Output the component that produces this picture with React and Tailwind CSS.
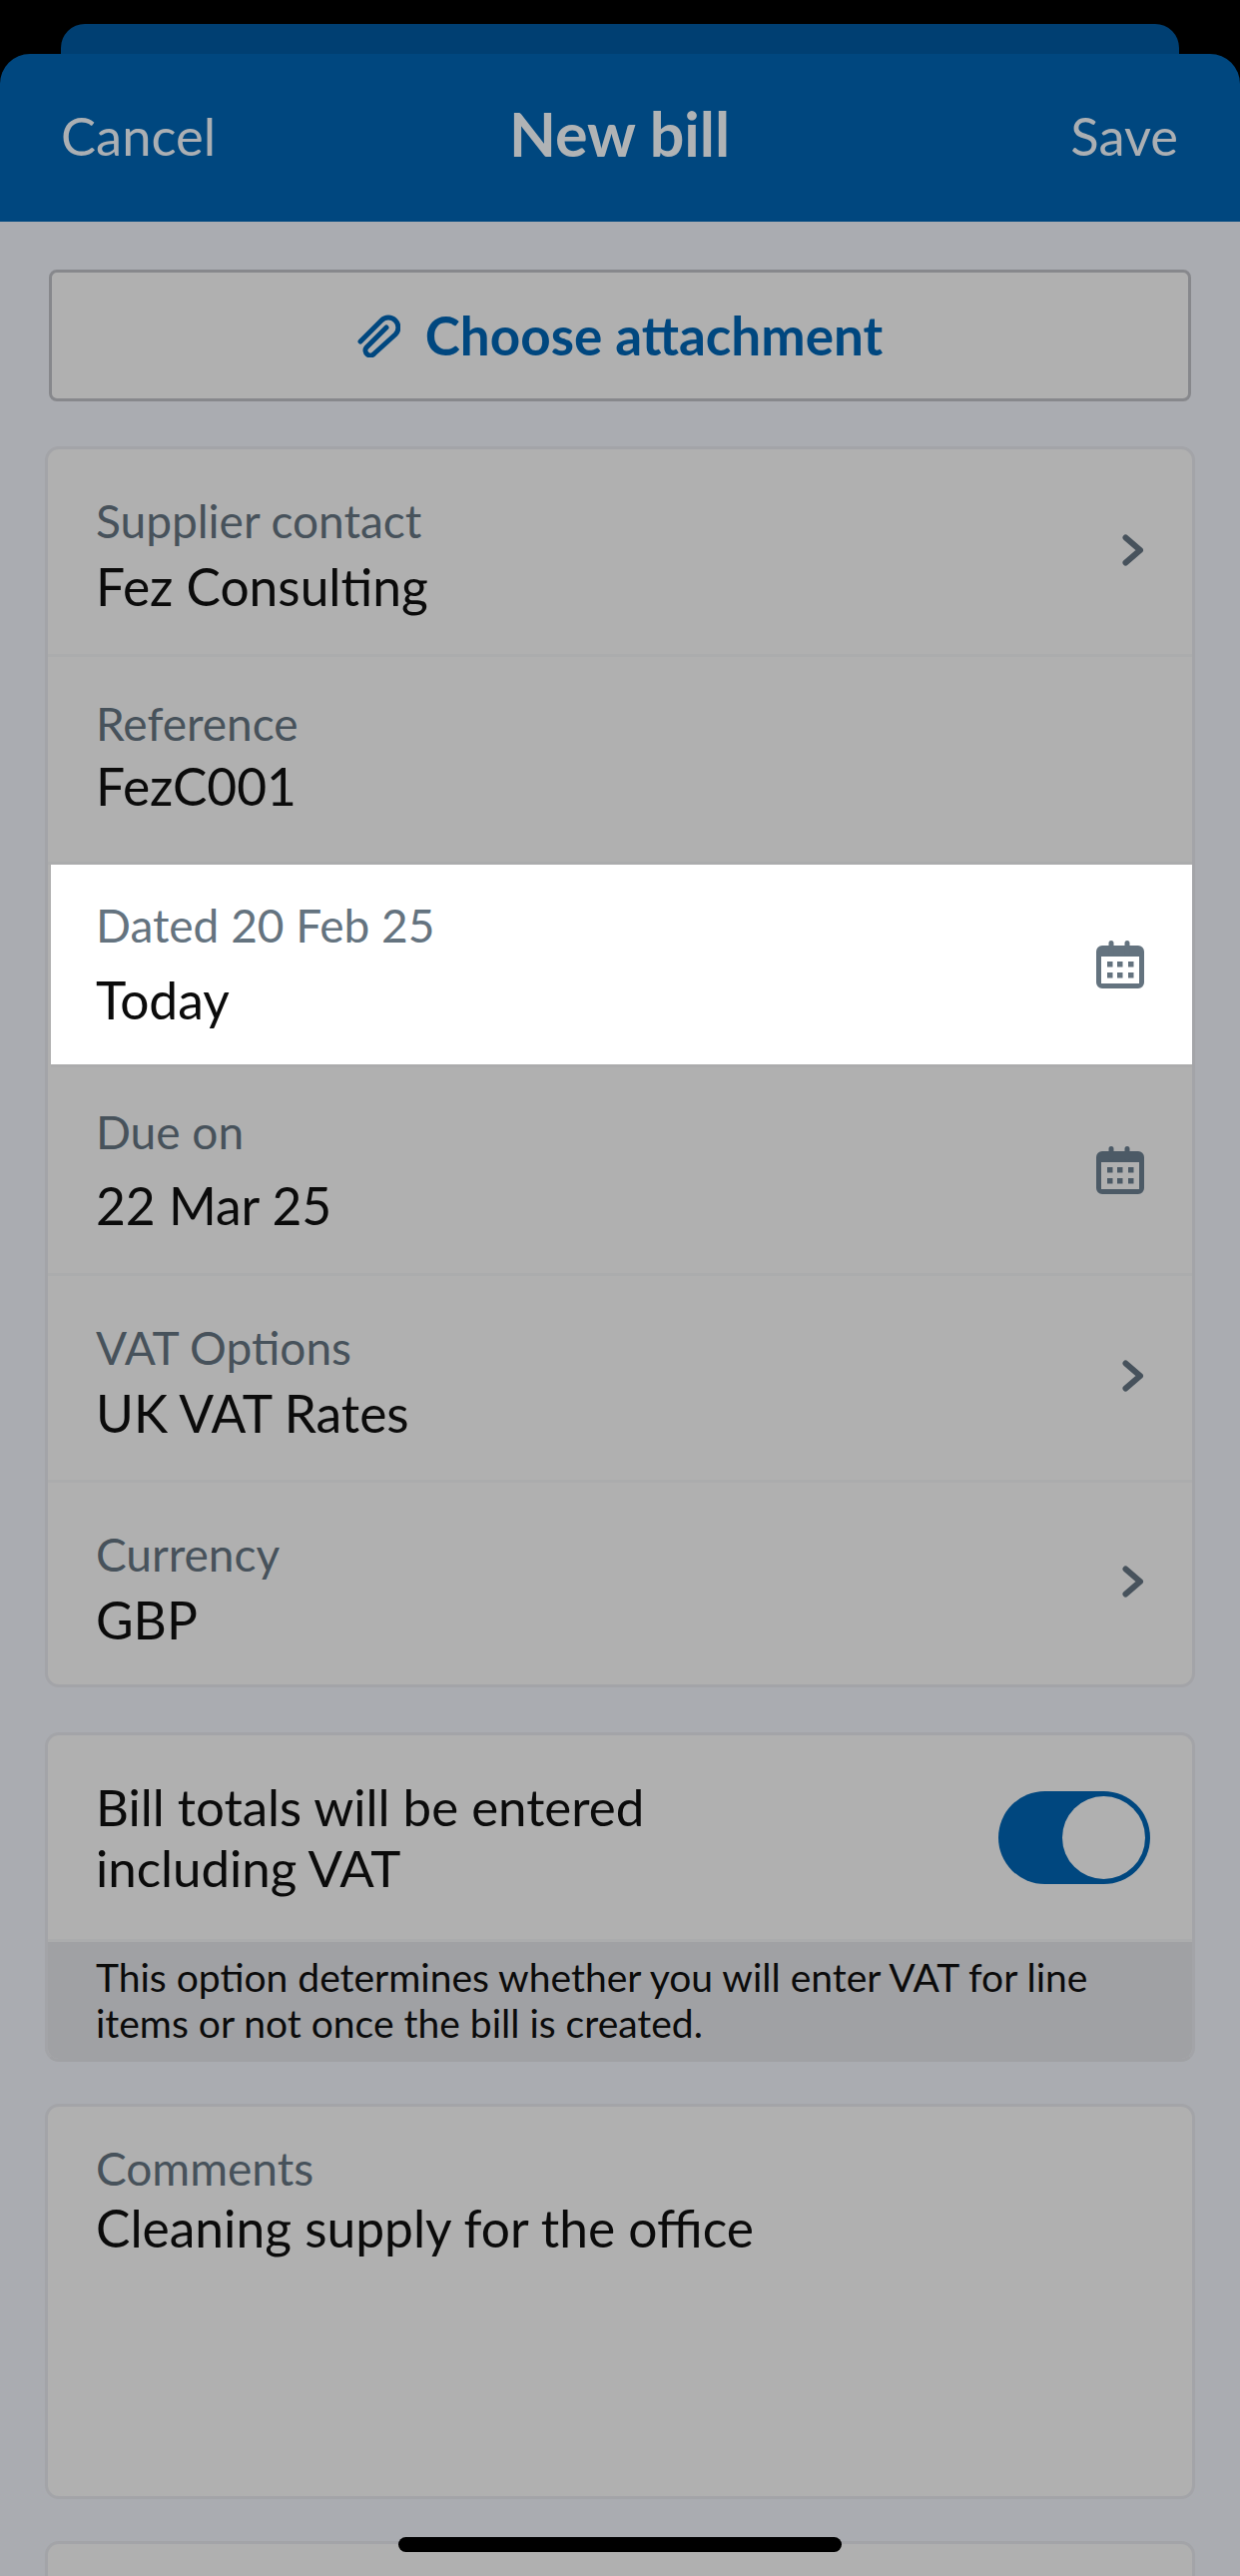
import React from 'react';

const font = { fontFamily: 'Lato, sans-serif' };

function Chevron() {
  return (
    <svg width="23" height="32" viewBox="0 0 23 32" fill="none" className="shrink-0 mb-[4px]">
      <path d="M4.5 3.5 L19 16 L4.5 28.5" stroke="#47525c" strokeWidth="6" strokeLinecap="round" strokeLinejoin="round" />
    </svg>
  );
}

function CalendarIcon({ color = '#4c5a66', className = '' }) {
  const dots = [11, 21, 32];
  return (
    <svg width="48" height="48" viewBox="0 0 48 48" className={`shrink-0 ${className}`}>
      <path
        fillRule="evenodd"
        fill={color}
        d="M6 5 H42 A6 6 0 0 1 48 11 V42 A6 6 0 0 1 42 48 H6 A6 6 0 0 1 0 42 V11 A6 6 0 0 1 6 5 Z M5 16 V43 H43 V16 Z"
      />
      <path d="M15 2.5 V12 M31 2.5 V12" stroke={color} strokeWidth="5" strokeLinecap="round" />
      {dots.map(x => <rect key={x} x={x} y="21" width="5.5" height="5.5" fill={color} />)}
      {dots.map(x => <rect key={x} x={x} y="32" width="5.5" height="5.5" fill={color} />)}
    </svg>
  );
}

function PaperClip() {
  return (
    <svg width="43" height="43" viewBox="0 0 43 43" fill="none" className="shrink-0">
      <path
        d="M3 27 L24 6 A9.5 9.5 0 0 1 38 20 L17 39 A5 5 0 0 1 9 33 L29 13"
        stroke="#00477f"
        strokeWidth="5"
        strokeLinecap="round"
        strokeLinejoin="round"
      />
    </svg>
  );
}

function Row({ label, value, icon, active, last, h, top, gap = '' }) {
  return (
    <div className={`flex items-center justify-between pr-[48px] ${h} ${active ? 'bg-white ml-[3px] pl-[45px] shadow-[0_3px_0_#acacad]' : 'pl-[48px]'} ${last || active ? '' : 'border-b-[3px] border-[#abacad]'}`}>
      <div className={`flex flex-col self-start ${top}`}>
        <span className={`text-[46px] leading-[54px] ${active ? 'text-[#64737f]' : 'text-[#47525b]'}`}>{label}</span>
        <span className={`text-[51.5px] leading-[60px] text-[#0b0b0b] ${gap}`}>{value}</span>
      </div>
      {icon}
    </div>
  );
}

export default function App() {
  return (
    <div className="w-[1242px] h-[2580px] bg-black overflow-hidden relative flex flex-col pt-[24px]" style={font}>
      <div className="mx-[61px] h-[30px] shrink-0 rounded-t-[24px] bg-[#003f72]" />
      <div className="h-[168px] shrink-0 rounded-t-[30px] bg-[#00477f] flex items-start pl-[61px] pr-[62px] pt-[52px]">
        <span className="flex-1 text-[52.5px] leading-[60px] text-[#abafb3]">Cancel</span>
        <span className="text-[61px] leading-[64px] font-bold text-[#b0b3b5] -mt-[4px]">New bill</span>
        <span className="flex-1 text-right text-[52.5px] leading-[60px] text-[#abafb3]">Save</span>
      </div>

      <div className="flex-1 bg-[#aaacb1] px-[45px] pt-[48px] flex flex-col">
        <div className="h-[132px] mx-[4px] shrink-0 rounded-[8px] border-[3px] border-[#87888c] bg-[#b0b0b0] flex items-center justify-center gap-[25px]">
          <PaperClip />
          <span className="text-[53px] font-bold text-[#00477f]">Choose attachment</span>
        </div>

        <div className="mt-[45px] shrink-0 rounded-[14px] border-[3px] border-[#a3a4a8] bg-[#b0b0b0]">
          <Row label="Supplier contact" value="Fez Consulting" icon={<Chevron />} h="h-[208px]" top="pt-[45px]" gap="mt-[8px]" />
          <Row label="Reference" value="FezC001" h="h-[208px]" top="pt-[40px]" gap="mt-[5px]" />
          <Row label="Dated 20 Feb 25" value="Today" icon={<CalendarIcon color="#64737f" />} active h="h-[200px]" top="pt-[34px]" gap="mt-[17px]" />
          <Row label="Due on" value="22 Mar 25" icon={<CalendarIcon className="mt-[3px]" />} h="h-[212px]" top="pt-[41px]" gap="mt-[16px]" />
          <Row label="VAT Options" value="UK VAT Rates" icon={<Chevron />} h="h-[207px]" top="pt-[45px]" gap="mt-[8px]" />
          <Row label="Currency" value="GBP" icon={<Chevron />} last h="h-[202px]" top="pt-[45px]" gap="mt-[8px]" />
        </div>

        <div className="mt-[45px] shrink-0 rounded-[14px] border-[3px] border-[#a3a4a8] border-b-[#a0a1a4] bg-[#b0b0b0] overflow-hidden">
          <div className="h-[207px] flex items-center justify-between pl-[48px] pr-[42px] border-b-[3px] border-[#abacad]">
            <span className="text-[51px] leading-[61px] text-[#0b0b0b] w-[640px]">Bill totals will be entered including VAT</span>
            <div className="w-[152px] h-[93px] rounded-full bg-[#00477f] flex items-center justify-end pr-[5px]">
              <div className="w-[83px] h-[83px] rounded-full bg-[#b0b0b0]" />
            </div>
          </div>
          <div className="h-[117px] bg-[#a0a1a4] pl-[48px] pr-[40px] pt-[12px] text-[39px] leading-[46px] text-[#0b0b0b]">
            This option determines whether you will enter VAT for line items or not once the bill is created.
          </div>
        </div>

        <div className="mt-[42px] h-[396px] shrink-0 rounded-[14px] border-[3px] border-[#a3a4a8] bg-[#b0b0b0] pl-[48px] pt-[35px] flex flex-col">
          <span className="text-[46px] leading-[54px] text-[#47525b]">Comments</span>
          <span className="text-[51.5px] leading-[60px] text-[#0b0b0b] mt-[2px]">Cleaning supply for the office</span>
        </div>

        <div className="mt-[42px] h-[60px] shrink-0 rounded-t-[14px] border-[3px] border-b-0 border-[#a3a4a8] bg-[#b0b0b0]" />
      </div>

      <div className="absolute left-[399px] top-[2541px] w-[444px] h-[15px] rounded-full bg-black" />
    </div>
  );
}
